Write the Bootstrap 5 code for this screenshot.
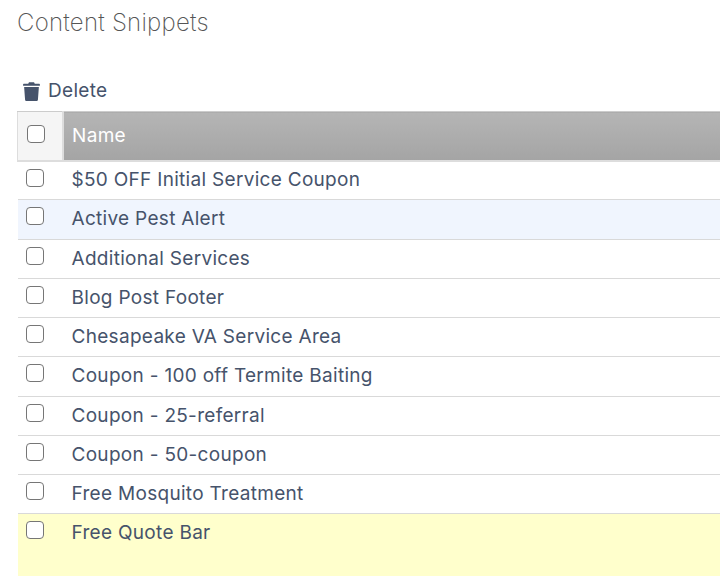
<!DOCTYPE html>
<html lang="en">
<head>
  <meta charset="UTF-8" />
  <meta name="viewport" content="width=device-width, initial-scale=1" />
  <title>Content Snippets</title>
  <link href="https://cdn.jsdelivr.net/npm/bootstrap@5.3.0/dist/css/bootstrap.min.css" rel="stylesheet" />
  <style>
    html, body { height: 576px; overflow: hidden; }
    body { font-family: "Inter", "Liberation Sans", sans-serif; color: #46536b; background: #fff; }
    .page-wrap { padding-left: 17px; }
    .page-title { font-size: 24px; font-weight: 200; line-height: 28px; color: #555; margin: 0; padding-top: 9px; letter-spacing: .25px; }
    .delete-link { margin: 33px 0 0 6px; height: 41px; font-size: 19px; line-height: 28px; color: #46536b; letter-spacing: .3px; }
    .delete-link svg { width: 17px; height: 20px; }
    .snippet-table { width: 100%; border-collapse: collapse; table-layout: fixed; font-size: 19px; letter-spacing: .3px; }
    .snippet-table th { height: 49px; padding: 0 0 0 8.6px; font-weight: 400; color: #fff; background: linear-gradient(#b5b5b5, #a4a4a4); border-top: 1px solid #ccc; border-bottom: 2px solid #ddd; vertical-align: middle; }
    .snippet-table th.check-col { background: #f5f5f5; border-right: 2px solid #ddd; border-left: 1px solid #ddd; padding: 0 0 4px 9px; width: 45px; }
    .snippet-table td { height: 39.25px; padding: 7px 0 0 9px; vertical-align: top; border-bottom: 1px solid #d9d9d9; line-height: 24px; }
    .snippet-table tbody tr:first-child td { padding-top: 6px; }
    .snippet-table td.check-col, .snippet-table tbody tr:first-child td.check-col { padding: 6px 0 0 8px; }
    .snippet-table tr.row-alert td { background: #f0f5fe; }
    .snippet-table tr.row-quote td { background: #ffffcc; height: 62px; border-bottom: 0; }
    .snippet-box { display: block; width: 18px; height: 18px; margin: 0; border: 1px solid #767676; border-radius: 4px; background: #fff; appearance: none; }
    .snippet-table td .snippet-box { margin-top: 1px; }
  </style>
</head>
<body>
  <div class="page-wrap">
    <h1 class="page-title">Content Snippets</h1>
    <div class="delete-link d-flex align-items-center gap-2">
      <svg viewBox="0 0 16 19" aria-hidden="true"><path fill="#46536b" d="M5.6 1.2h4.8l.7 1.4H15c.6 0 1 .4 1 1v.9H0v-.9c0-.6.4-1 1-1h3.900zM1 5.700h14l-.9 12c-.1.8-.6 1.300-1.400 1.300H3.300c-.8 0-1.300-.5-1.400-1.300z"/></svg>
      <span>Delete</span>
    </div>
    <table class="snippet-table">
      <thead>
        <tr>
          <th class="check-col"><input class="snippet-box" type="checkbox" aria-label="Select all" /></th>
          <th>Name</th>
        </tr>
      </thead>
      <tbody>
        <tr><td class="check-col"><input class="snippet-box" type="checkbox" /></td><td>$50 OFF Initial Service Coupon</td></tr>
        <tr class="row-alert"><td class="check-col"><input class="snippet-box" type="checkbox" /></td><td>Active Pest Alert</td></tr>
        <tr><td class="check-col"><input class="snippet-box" type="checkbox" /></td><td>Additional Services</td></tr>
        <tr><td class="check-col"><input class="snippet-box" type="checkbox" /></td><td>Blog Post Footer</td></tr>
        <tr><td class="check-col"><input class="snippet-box" type="checkbox" /></td><td>Chesapeake VA Service Area</td></tr>
        <tr><td class="check-col"><input class="snippet-box" type="checkbox" /></td><td>Coupon - 100 off Termite Baiting</td></tr>
        <tr><td class="check-col"><input class="snippet-box" type="checkbox" /></td><td>Coupon - 25-referral</td></tr>
        <tr><td class="check-col"><input class="snippet-box" type="checkbox" /></td><td>Coupon - 50-coupon</td></tr>
        <tr><td class="check-col"><input class="snippet-box" type="checkbox" /></td><td>Free Mosquito Treatment</td></tr>
        <tr class="row-quote"><td class="check-col"><input class="snippet-box" type="checkbox" /></td><td>Free Quote Bar</td></tr>
      </tbody>
    </table>
  </div>
  <script src="https://cdn.jsdelivr.net/npm/bootstrap@5.3.0/dist/js/bootstrap.bundle.min.js"></script>
</body>
</html>
